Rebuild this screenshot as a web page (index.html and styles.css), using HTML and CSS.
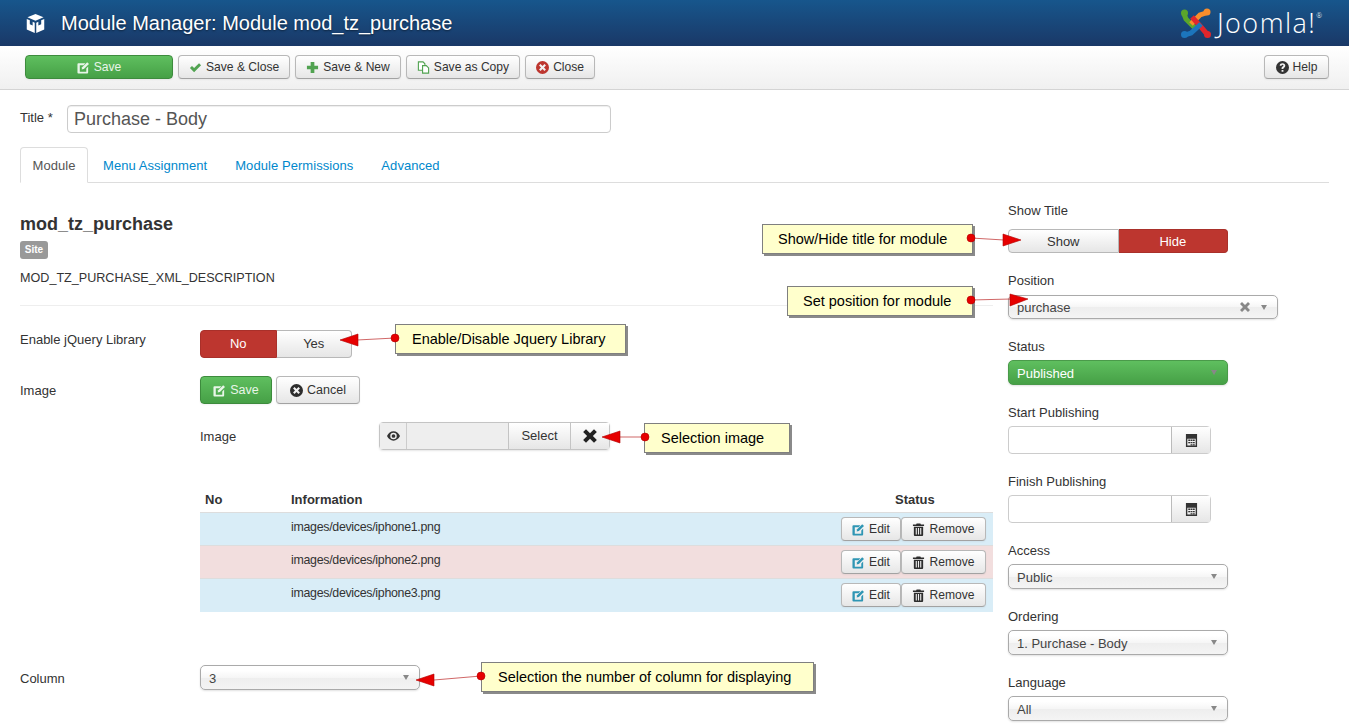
FILE: index.html
```html
<!DOCTYPE html>
<html lang="en">
<head>
  <meta charset="UTF-8">
  <title>Module Manager: Module mod_tz_purchase</title>
  <link rel="stylesheet" href="styles.css">
</head>
<body>
  <svg class="sprite" width="0" height="0">
    <symbol id="i-edit" viewBox="0 0 14 14"><path d="M1.500 2.500h7.500l-2 2H3v7h7V8l2-2v6.500a1 1 0 0 1-1 1H1.500a1 1 0 0 1-1-1v-9a1 1 0 0 1 1-1z"/><path d="M5.500 6.800 11 1.300l1.900 1.900-5.500 5.500-2.400.5z"/></symbol>
    <symbol id="i-trash" viewBox="0 0 14 14"><path d="M5 .5h4l.6 1.200H13v1.600H1V1.700h3.400z"/><path d="M2 4h10v9a1 1 0 0 1-1 1H3a1 1 0 0 1-1-1zm2 1.500V12.500h1.200V5.500zm2.400 0V12.500h1.200V5.500zm2.400 0V12.500H10V5.500z" fill-rule="evenodd"/></symbol>
    <symbol id="i-x-circle" viewBox="0 0 14 14"><path fill-rule="evenodd" d="M7 0a7 7 0 1 1 0 14A7 7 0 0 1 7 0zM4.900 3.300 3.300 4.900 5.400 7 3.300 9.100l1.600 1.600L7 8.600l2.100 2.100 1.600-1.600L8.600 7l2.100-2.100-1.600-1.600L7 5.400z"/></symbol>
    <symbol id="i-cal" viewBox="0 0 14 14"><path fill-rule="evenodd" d="M1 0h12v14H1zM2.500 5v7.500h9V5zM3.500 6h2v1.500h-2zm2.500 0h2v1.500H6zm2.500 0h2v1.500h-2zM3.500 8.500h2V10h-2zm2.500 0h2V10H6zm2.500 0h2V10h-2zM6 11h2v1H6zm2.500 0h2v1h-2z"/></symbol>
  </svg>

  <header class="topbar">
    <svg class="topbar-icon" viewBox="0 0 20 20"><path d="M10 0 18.500 3.500 10 7 1.500 3.500z"/><path d="M.8 5.300 4 6.600v4.200l3 1.300V8.200l2.200 1V20L.8 16.200z"/><path d="M19.200 5.300 16 6.600v4.200l-3 1.300V8.200l-2.200 1V20l8.400-3.800z"/></svg>
    <h1>Module Manager: Module mod_tz_purchase</h1>
    <div class="brand">
      <svg class="brand-mark" viewBox="0 0 30 30" fill="none" stroke-width="5">
        <path stroke="#5aa62b" d="M3 6 5 11 14 20"/>
        <circle cx="3.500" cy="5" r="3.500" fill="#5aa62b"/>
        <path stroke="#f78d2c" d="M25 5 19 7 10 16"/>
        <circle cx="26" cy="4" r="3.500" fill="#f78d2c"/>
        <path stroke="#e0262c" d="M11 9 20 19 26 26"/>
        <circle cx="26.500" cy="26.500" r="3.500" fill="#e0262c"/>
        <path stroke="#1c75bc" d="M4 27 10 25 20 16"/>
        <circle cx="3.500" cy="26.500" r="3.500" fill="#1c75bc"/>
      </svg>
      <span class="brand-name">Joomla!<sup>®</sup></span>
    </div>
  </header>

  <div class="toolbar">
    <button class="btn btn-success btn-wide"><svg class="icon"><use href="#i-edit"/></svg>Save</button>
    <button class="btn"><svg class="icon icon-green" viewBox="0 0 14 14"><path d="M1 7.500 3.200 5.300 5.500 7.600 10.800 2.300 13 4.500 5.500 12z"/></svg>Save &amp; Close</button>
    <button class="btn"><svg class="icon icon-green" viewBox="0 0 14 14"><path d="M5 1h4v4h4v4H9v4H5V9H1V5h4z"/></svg>Save &amp; New</button>
    <button class="btn"><svg class="icon icon-copy" viewBox="0 0 14 14"><path d="M1.500 1h5l2 2v7h-7z"/><path d="M6 5h4l2.500 2.500V13H6z"/></svg>Save as Copy</button>
    <button class="btn"><svg class="icon icon-red"><use href="#i-x-circle"/></svg>Close</button>
    <button class="btn btn-help"><svg class="icon" viewBox="0 0 14 14"><path fill-rule="evenodd" d="M7 0a7 7 0 1 1 0 14A7 7 0 0 1 7 0zM6 9.700v1.900h2V9.700zM7 2.500c-1.700 0-2.900.9-3 2.500h1.900c.1-.6.500-.9 1.100-.9.600 0 1 .3 1 .8 0 .4-.2.600-.8 1-.8.500-1.200 1-1.200 2.100V8.700h1.900c0-.7.200-1 .9-1.500.8-.5 1.200-1.100 1.200-2 0-1.700-1.300-2.700-3-2.700z"/></svg>Help</button>
  </div>

  <div class="content">
    <div class="title-row">
      <label class="title-label">Title *</label>
      <input class="title-input" type="text" value="Purchase - Body">
    </div>

    <ul class="tabs">
      <li class="active">Module</li>
      <li>Menu Assignment</li>
      <li>Module Permissions</li>
      <li>Advanced</li>
    </ul>

    <div class="columns">
      <div class="col-main">
        <h3>mod_tz_purchase</h3>
        <span class="badge">Site</span>
        <p class="desc">MOD_TZ_PURCHASE_XML_DESCRIPTION</p>
        <hr>

        <div class="row row-jquery">
          <div class="row-label">Enable jQuery Library</div>
          <div class="switch switch-small">
            <span class="seg seg-red">No</span>
            <span class="seg">Yes</span>
          </div>
        </div>

        <div class="row row-image">
          <div class="row-label">Image</div>
          <div class="btn-row">
            <button class="btn btn-success btn-tall btn-save"><svg class="icon"><use href="#i-edit"/></svg>Save</button>
            <button class="btn btn-tall btn-cancel"><svg class="icon icon-dark"><use href="#i-x-circle"/></svg>Cancel</button>
          </div>
        </div>

        <div class="image-field">
          <span class="image-label">Image</span>
          <div class="media">
            <span class="media-eye"><svg viewBox="0 0 14 10"><path fill-rule="evenodd" d="M7 0c3 0 5.500 2 7 5-1.500 3-4 5-7 5S1.500 8 0 5c1.500-3 4-5 7-5zm0 1.500a3.500 3.500 0 1 0 0 7 3.500 3.500 0 0 0 0-7zM7 3a2 2 0 1 1 0 4 2 2 0 0 1 0-4z"/></svg></span>
            <span class="media-path"></span>
            <span class="media-btn">Select</span>
            <span class="media-x"><svg viewBox="0 0 14 14"><path d="M3.500 1 7 4.500 10.500 1 13 3.500 9.500 7 13 10.500 10.500 13 7 9.500 3.500 13 1 10.500 4.500 7 1 3.500z"/></svg></span>
          </div>
        </div>

        <table class="images">
          <thead>
            <tr><th class="c-no">No</th><th class="c-info">Information</th><th class="c-status">Status</th></tr>
          </thead>
          <tbody>
            <tr class="info">
              <td></td><td>images/devices/iphone1.png</td>
              <td class="actions"><button class="btn btn-sm"><svg class="icon icon-blue"><use href="#i-edit"/></svg>Edit</button><button class="btn btn-sm"><svg class="icon icon-dark"><use href="#i-trash"/></svg>Remove</button></td>
            </tr>
            <tr class="error">
              <td></td><td>images/devices/iphone2.png</td>
              <td class="actions"><button class="btn btn-sm"><svg class="icon icon-blue"><use href="#i-edit"/></svg>Edit</button><button class="btn btn-sm"><svg class="icon icon-dark"><use href="#i-trash"/></svg>Remove</button></td>
            </tr>
            <tr class="info">
              <td></td><td>images/devices/iphone3.png</td>
              <td class="actions"><button class="btn btn-sm"><svg class="icon icon-blue"><use href="#i-edit"/></svg>Edit</button><button class="btn btn-sm"><svg class="icon icon-dark"><use href="#i-trash"/></svg>Remove</button></td>
            </tr>
          </tbody>
        </table>

        <div class="row row-column">
          <div class="row-label">Column</div>
          <div class="chzn chzn-column">3<i class="caret"></i></div>
        </div>
      </div>

      <aside class="col-side">
        <label class="field-label">Show Title</label>
        <div class="switch switch-wide field-first">
          <span class="seg">Show</span>
          <span class="seg seg-red">Hide</span>
        </div>

        <label class="field-label">Position</label>
        <div class="chzn chzn-long field-pos">purchase<svg class="clear" viewBox="0 0 10 10"><path d="M2 0 5 3 8 0 10 2 7 5 10 8 8 10 5 7 2 10 0 8 3 5 0 2z"/></svg><i class="caret"></i></div>

        <label class="field-label">Status</label>
        <div class="chzn chzn-green field">Published<i class="caret"></i></div>

        <label class="field-label">Start Publishing</label>
        <div class="date field"><span class="date-input"></span><span class="date-btn"><svg><use href="#i-cal"/></svg></span></div>

        <label class="field-label">Finish Publishing</label>
        <div class="date field"><span class="date-input"></span><span class="date-btn"><svg><use href="#i-cal"/></svg></span></div>

        <label class="field-label">Access</label>
        <div class="chzn field">Public<i class="caret"></i></div>

        <label class="field-label">Ordering</label>
        <div class="chzn field">1. Purchase - Body<i class="caret"></i></div>

        <label class="field-label">Language</label>
        <div class="chzn field">All<i class="caret"></i></div>
      </aside>
    </div>
  </div>

  <!-- screenshot annotations, drawn over the form -->
  <div class="note note-1">Show/Hide title for module</div>
  <div class="note note-2">Set position for module</div>
  <div class="note note-3">Enable/Disable Jquery Library</div>
  <div class="note note-4">Selection image</div>
  <div class="note note-5">Selection the number of column for displaying</div>
  <svg class="arrows" viewBox="0 0 1349 728">
    <g fill="#e60000" stroke="#b00000" stroke-width="0.600">
      <path d="M971 238 1004 240"/><circle cx="971" cy="238" r="4"/><path d="M1003 234 1021 240 1003 246z"/>
      <path d="M971 300 1011 299"/><circle cx="971" cy="300" r="4"/><path d="M1010 294 1028 299 1010 306z"/>
      <path d="M395 338 357 340"/><circle cx="395" cy="338" r="4"/><path d="M358 334 340 340 358 346z"/>
      <path d="M645 437 620 437"/><circle cx="645" cy="437" r="4"/><path d="M620 431 602 437 620 443z"/>
      <path d="M481 676 434 680"/><circle cx="481" cy="676" r="4"/><path d="M434 674 416 680 434 686z"/>
    </g>
  </svg>
</body>
</html>
```

FILE: styles.css
```css
html, body {
  height: 728px;
  overflow: hidden;
}
body {
  position: relative;
  margin: 0;
  font-family: "Liberation Sans", Arial, sans-serif;
  font-size: 13px;
  line-height: 18px;
  color: #333;
  background: #fff;
}
.sprite {
  position: absolute;
}

/* top bar */
.topbar {
  display: flex;
  align-items: center;
  height: 46px;
  padding: 0 27px 0 26px;
  box-sizing: border-box;
  background: linear-gradient(#17568c, #1a3867);
  color: #fff;
}
.topbar-icon {
  width: 19px;
  height: 19px;
  fill: #fff;
  margin-right: 16px;
}
.topbar h1 {
  flex: 1;
  margin: 0;
  font-size: 20px;
  font-weight: normal;
  text-shadow: 0 1px 2px rgba(0, 0, 0, 0.5);
}
.brand {
  display: flex;
  align-items: center;
}
.brand-mark {
  width: 30px;
  height: 30px;
  margin-right: 6px;
}
.brand-name {
  font-family: "Open Sans", sans-serif;
  font-size: 27px;
  font-weight: 300;
  letter-spacing: 1.450px;
  line-height: 30px;
}
.brand-name sup {
  font-size: 7px;
  letter-spacing: 0;
  vertical-align: 15px;
  line-height: 0;
}

/* toolbar */
.toolbar {
  display: flex;
  gap: 5px;
  height: 44px;
  padding: 9px 20px 0 25px;
  box-sizing: border-box;
  background: linear-gradient(#fff, #f0f0f0);
  border-bottom: 1px solid #d4d4d4;
}
.btn {
  display: inline-flex;
  align-items: center;
  justify-content: center;
  height: 24px;
  padding: 0 10px;
  box-sizing: border-box;
  font: 12.100px "Liberation Sans", Arial, sans-serif;
  color: #333;
  background: linear-gradient(#fff, #e6e6e6);
  border: 1px solid #b8b8b8;
  border-bottom-color: #a2a2a2;
  border-radius: 4px;
  box-shadow: 0 1px 2px rgba(0, 0, 0, 0.05);
}
.btn-success {
  color: #e8f5e8;
  background: linear-gradient(#5fbf5f, #46a046);
  border-color: #3d8b3d;
}
.btn-wide {
  width: 148px;
}
.btn-help {
  margin-left: auto;
  width: 65px;
}
.btn-tall {
  height: 28px;
  padding: 0;
  font-size: 12.500px;
}
.btn-save { width: 72px; }
.btn-cancel { width: 84px; }
.btn-sm {
  height: 24px;
  padding: 0;
}
.btn-sm:first-child { width: 60px; }
.btn-sm:last-child { width: 85px; }
.icon {
  width: 13px;
  height: 13px;
  margin-right: 4px;
  fill: currentColor;
  flex: none;
}
.icon-green { fill: #51a351; }
.icon-copy { fill: #fff; stroke: #51a351; stroke-width: 1.200; }
.icon-red { fill: #bd362f; }
.icon-blue { fill: #2f96b4; }
.icon-dark { fill: #2d2d2d; }

/* title + tabs */
.content {
  padding: 0 20px;
}
.title-row {
  display: flex;
  align-items: flex-start;
  padding-top: 15px;
}
.title-label {
  width: 47px;
  line-height: 25px;
}
.title-input {
  width: 544px;
  height: 28px;
  margin: 0;
  padding: 0 6px;
  box-sizing: border-box;
  font: 18px "Liberation Sans", Arial, sans-serif;
  color: #555;
  border: 1px solid #ccc;
  border-radius: 4px;
  box-shadow: inset 0 1px 1px rgba(0, 0, 0, 0.07);
}
.tabs {
  display: flex;
  margin: 14px 0 0;
  padding: 0;
  height: 35px;
  list-style: none;
  color: #08c;
  letter-spacing: 0.060px;
  border-bottom: 1px solid #ddd;
}
.tabs li {
  padding: 0 14px;
  line-height: 37px;
}
.tabs li.active {
  width: 68px;
  padding: 0;
  margin-right: 1px;
  height: 36px;
  box-sizing: border-box;
  line-height: 35px;
  text-align: center;
  color: #555;
  background: #fff;
  border: 1px solid #ddd;
  border-bottom-color: #fff;
  border-radius: 4px 4px 0 0;
}

/* main columns */
.columns {
  display: flex;
  gap: 15px;
}
.col-main {
  width: 973px;
  flex: none;
}
.col-side {
  flex: 1;
  padding-top: 18px;
}
.col-main h3 {
  margin: 29px 0 5px;
  font-size: 18px;
  line-height: 24px;
  color: #333;
}
.badge {
  display: block;
  width: 28px;
  height: 18px;
  box-sizing: border-box;
  font-size: 10px;
  font-weight: bold;
  line-height: 18px;
  text-align: center;
  color: #fff;
  background: #999;
  border-radius: 3px;
}
.desc {
  margin: 10px 0 0;
  font-size: 12.600px;
}
.col-main hr {
  margin: 18px 0 0;
  border: 0;
  border-top: 1px solid #eee;
}
.row {
  display: flex;
}
.row-label {
  width: 180px;
  flex: none;
  padding-top: 1px;
}
.row-jquery {
  margin-top: 24px;
}
.row-image {
  margin-top: 18px;
}
.row-image .row-label {
  height: 28px;
  box-sizing: border-box;
  line-height: 27px;
}
.btn-row {
  display: flex;
  gap: 4px;
}
.switch {
  display: flex;
  box-sizing: border-box;
}
.seg {
  flex: 1;
  display: flex;
  align-items: center;
  justify-content: center;
  background: linear-gradient(#fff, #e6e6e6);
  border: 1px solid #b8b8b8;
  border-left-width: 0;
}
.seg:first-child {
  border-left-width: 1px;
  border-radius: 4px 0 0 4px;
}
.seg:last-child {
  border-radius: 0 4px 4px 0;
}
.seg-red {
  color: #fff;
  background: #bd362f;
  border-color: #a9302a;
}
.switch-small {
  width: 152px;
  height: 28px;
}
.switch-wide {
  width: 220px;
  height: 24px;
}
.switch-wide .seg {
  padding-top: 1px;
}
.image-field {
  display: flex;
  margin: 18px 0 0 180px;
  height: 28px;
  align-items: center;
}
.image-label {
  width: 179px;
  padding-top: 1px;
}
.media {
  display: flex;
  width: 231px;
  height: 28px;
  box-sizing: border-box;
  border: 1px solid #c4c4c4;
  border-radius: 4px;
  box-shadow: 0 1px 2px rgba(0, 0, 0, 0.1);
}
.media span {
  display: flex;
  align-items: center;
  justify-content: center;
}
.media-eye {
  width: 26px;
  background: #eee;
  border-right: 1px solid #ccc;
}
.media-eye svg {
  width: 13px;
  height: 10px;
  fill: #333;
}
.media-path {
  flex: 1;
  background: #eee;
}
.media-btn {
  width: 61px;
  background: linear-gradient(#fff, #e6e6e6);
  border-left: 1px solid #c4c4c4;
}
.media-x {
  width: 38px;
  background: linear-gradient(#fff, #e6e6e6);
  border-left: 1px solid #c4c4c4;
}
.media-x svg {
  width: 16px;
  height: 16px;
  fill: #222;
}

/* image list */
.images {
  width: 793px;
  margin: 41px 0 0 180px;
  border-collapse: collapse;
  table-layout: fixed;
}
.images th {
  padding: 0 5px 3px;
  height: 18px;
  text-align: left;
  border-bottom: 1px solid #ddd;
}
.images .c-no { width: 76px; }
.images .c-status {
  width: 93px;
  padding-left: 118px;
}
.images td {
  height: 33px;
  padding: 5px 5px 0;
  box-sizing: border-box;
  font-size: 12.400px;
  letter-spacing: -0.300px;
  vertical-align: top;
  border-top: 1px solid #ddd;
}
.images tr.info td {
  background: #d9edf7;
}
.images tr.error td {
  background: #f2dede;
}
.images td.actions {
  padding: 4px 7px 0 0;
  letter-spacing: 0;
  text-align: right;
}
.row-column {
  margin-top: 53px;
  align-items: center;
}
.row-column .row-label {
  padding-top: 3px;
}

/* chosen style dropdowns */
.chzn {
  position: relative;
  width: 220px;
  height: 25px;
  padding-left: 8px;
  box-sizing: border-box;
  line-height: 25px;
  color: #444;
  background: linear-gradient(#fff 20%, #f6f6f6 50%, #eee 52%, #f4f4f4);
  border: 1px solid #aaa;
  border-radius: 5px;
  box-shadow: 0 1px 2px rgba(0, 0, 0, 0.12);
}
.chzn-long {
  width: 270px;
  height: 24px;
  line-height: 24px;
}
.chzn-green {
  color: #fff;
  background: linear-gradient(#5fbf5f, #46a046);
  border-color: #4a9a4a;
}
.caret {
  position: absolute;
  right: 10px;
  top: 9px;
  border-left: 3.500px solid transparent;
  border-right: 3.500px solid transparent;
  border-top: 5px solid #888;
}
.clear {
  position: absolute;
  right: 27px;
  top: 6px;
  width: 10px;
  height: 10px;
  fill: #888;
}
.field-label {
  display: block;
  padding-top: 1px;
  margin-bottom: -1px;
}
.field-first {
  margin: 10px 0 18px;
}
.field-pos {
  margin: 6px 0 18px;
}
.field {
  margin: 5px 0 18px;
}
.date {
  display: flex;
  width: 203px;
  height: 28px;
  box-sizing: border-box;
  border: 1px solid #ccc;
  border-radius: 4px;
}
.date-input {
  flex: 1;
}
.date-btn {
  display: flex;
  align-items: center;
  justify-content: center;
  width: 38px;
  background: linear-gradient(#fff, #e6e6e6);
  border-left: 1px solid #bbb;
}
.date-btn svg {
  width: 13px;
  height: 13px;
  fill: #333;
}

/* annotations */
.arrows {
  position: absolute;
  left: 0;
  top: 0;
  width: 1349px;
  height: 728px;
  pointer-events: none;
}
.note {
  position: absolute;
  display: flex;
  align-items: center;
  box-sizing: border-box;
  height: 30px;
  font-size: 14.500px;
  color: #000;
  background: #ffc;
  border: 1px solid #7f7f7f;
  box-shadow: 2px 2px 0 #8a8a8a;
}
.note-1 { left: 762px; top: 224px; width: 211px; padding-left: 15px; }
.note-2 { left: 787px; top: 286px; width: 186px; padding-left: 15px; }
.note-3 { left: 395px; top: 324px; width: 231px; padding-left: 16px; }
.note-4 { left: 644px; top: 423px; width: 146px; padding-left: 16px; }
.note-5 { left: 481px; top: 662px; width: 333px; padding-left: 16px; }
```
